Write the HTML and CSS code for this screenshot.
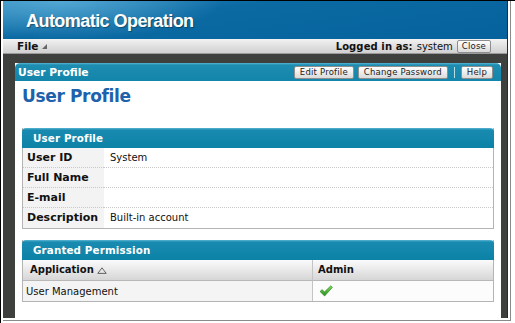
FILE: index.html
```html
<!DOCTYPE html>
<html>
<head>
<meta charset="utf-8">
<link rel="stylesheet" href="styles.css">
</head>
<body>
<div class="frame">
  <div class="win">
    <div class="app">
      <header class="topbar"><h1 class="title">Automatic Operation</h1></header>
      <nav class="menubar">
        <span class="menu">File <svg class="menu-arrow" width="5" height="5" viewBox="0 0 5 5"><polygon points="0,5 5,5 5,0" fill="#666"/></svg></span>
        <div class="login"><b>Logged in as:</b> <span class="user">system</span> <button class="btn">Close</button></div>
      </nav>
      <main class="main">
        <section class="panel">
          <div class="panel-head">
            <span class="panel-title">User Profile</span>
            <div class="actions">
              <button class="btn">Edit Profile</button>
              <button class="btn">Change Password</button>
              <span class="sep"></span>
              <button class="btn">Help</button>
            </div>
          </div>
          <div class="panel-body">
            <h2 class="heading">User Profile</h2>
            <div class="box">
              <div class="box-head">User Profile</div>
              <div class="props">
                <div class="lbl">User ID</div><div class="val">System</div>
                <div class="lbl">Full Name</div><div class="val"></div>
                <div class="lbl">E-mail</div><div class="val"></div>
                <div class="lbl last">Description</div><div class="val last">Built-in account</div>
              </div>
            </div>
            <div class="box box2">
              <div class="box-head">Granted Permission</div>
              <div class="grid">
                <div class="th th-app">Application <svg class="sort" width="10" height="7" viewBox="0 0 10 7"><polygon points="5,0.8 9.2,6.4 0.8,6.4" fill="none" stroke="#555" stroke-width="0.9"/></svg></div>
                <div class="th th-admin">Admin</div>
                <div class="td td-app">User Management</div>
                <div class="td td-admin"><svg width="14" height="12" viewBox="0 0 14 12"><defs><linearGradient id="g" x1="0" y1="0" x2="0" y2="1"><stop offset="0" stop-color="#7ee05a"/><stop offset="1" stop-color="#1f8f1a"/></linearGradient></defs><path d="M1 6.5 L3.2 4.6 L5.4 7 L11.8 0.8 L13.4 2.4 L5.6 11 Z" fill="url(#g)" stroke="#2c7a1e" stroke-width="0.6"/></svg></div>
              </div>
            </div>
          </div>
        </section>
      </main>
    </div>
  </div>
</div>
</body>
</html>
```
FILE: styles.css
```css
* { box-sizing: border-box; }
html, body { margin: 0; padding: 0; background: #fff; }
body { font-family: "DejaVu Sans", Verdana, sans-serif; color: #111; }

.frame {
  width: 515px;
  height: 323px;
  border-left: 1px solid #000;
  border-top: 1px solid #000;
  padding-left: 2px;
  overflow: hidden;
}
.win {
  width: 508px;
  height: 320px;
  border-right: 1px solid #8a8a8a;
  border-bottom: 1px solid #8a8a8a;
  padding-right: 2px;
  padding-bottom: 2px;
}
.app {
  width: 505px;
  height: 317px;
  display: flex;
  flex-direction: column;
  background: #3d403d;
  border-right: 1px solid #2a2a2a;
}

.topbar {
  height: 38px;
  flex: none;
  background:
    radial-gradient(ellipse 160px 38px at 60px 0px, rgba(120,200,235,0.55), rgba(120,200,235,0) 100%),
    linear-gradient(172deg, #2c86bb 0%, #0c6aa3 35%, #05629c 100%);
  padding-left: 23px;
  display: flex;
  align-items: center;
}
.title {
  margin: 0;
  font-family: "Liberation Sans", Arial, sans-serif;
  font-weight: bold;
  font-size: 18px;
  letter-spacing: -0.55px;
  color: #fff;
  text-shadow: 1px 1px 1px rgba(0,0,0,0.35);
  padding-top: 3px;
}

.menubar {
  height: 15px;
  flex: none;
  background: linear-gradient(#f2f2f2, #d0d0d0);
  border-bottom: 1px solid #9a9a9a;
  display: flex;
  align-items: center;
  justify-content: space-between;
  padding: 0 16px 0 14px;
}
.menu { font-weight: bold; font-size: 10.5px; display: flex; align-items: center; gap: 3px; }
.menu-arrow { margin-top: 1px; }
.login { font-size: 10px; display: flex; align-items: center; }
.login b { letter-spacing: 0.1px; }
.user { margin-left: 4px; }

.btn {
  font-family: "DejaVu Sans", Verdana, sans-serif;
  font-size: 8.5px;
  color: #222;
  height: 13px;
  line-height: 11px;
  padding: 0 5px;
  margin: 0;
  border: 1px solid #8e8e8e;
  border-radius: 2px;
  background: linear-gradient(#ffffff, #dadada);
  letter-spacing: 0.2px;
}
.login .btn { margin-left: 4px; padding: 0 4px; }

.main {
  flex: 1;
  padding: 9px 6px 0 12px;
  display: flex;
  flex-direction: column;
}
.panel {
  flex: 1;
  display: flex;
  flex-direction: column;
  background: #fff;
}
.panel-head {
  height: 18px;
  flex: none;
  border-radius: 5px 5px 0 0;
  background: linear-gradient(#59b5d3 0px, #1d8db1 2px, #1485aa 100%);
  display: flex;
  align-items: center;
  justify-content: space-between;
  padding: 0 8px 0 3px;
}
.panel-title { color: #fff; font-weight: bold; font-size: 10.7px; }
.actions { display: flex; align-items: center; gap: 4px; }
.sep { width: 1px; height: 11px; background: #b9dbe6; margin: 0 2px 0 2px; }

.panel-body { flex: 1; padding: 5px 7px 0 7px; }
.heading {
  margin: 0;
  font-size: 17px;
  line-height: 21px;
  letter-spacing: -0.35px;
  color: #1d62ab;
  font-weight: bold;
}

.box {
  margin-top: 21px;
  border: 1px solid #b4b4b4;
  border-top: none;
}
.box2 { margin-top: 11px; }
.box-head {
  height: 20px;
  margin: 0 -1px;
  border-radius: 4px 4px 0 0;
  background: linear-gradient(#5ab6d3 0px, #1a8bb0 2px, #0b82a7 100%);
  color: #fff;
  font-weight: bold;
  font-size: 10.3px;
  letter-spacing: 0.15px;
  line-height: 20px;
  padding-left: 11px;
}

.props {
  display: grid;
  grid-template-columns: 81px 1fr;
}
.lbl, .val {
  height: 20px;
  line-height: 19px;
  border-bottom: 1px dotted #c8c8c8;
}
.lbl {
  background: #f3f3f3;
  font-weight: bold;
  font-size: 11px;
  padding-left: 4px;
}
.val { font-size: 10px; padding-left: 6px; }
.lbl.last, .val.last { border-bottom: none; height: 20px; }

.grid {
  display: grid;
  grid-template-columns: 289px 1fr;
}
.th {
  height: 21px;
  line-height: 20px;
  font-weight: bold;
  font-size: 10px;
  background: linear-gradient(#fbfbfb, #d6d6d6);
  border-bottom: 1px solid #b8b8b8;
  display: flex;
  align-items: center;
}
.th-app { padding-left: 7px; gap: 3px; }
.th-admin { padding-left: 5px; border-left: 1px solid #c4c4c4; }
.td {
  height: 20px;
  font-size: 10px;
  display: flex;
  align-items: center;
}
.td-app { padding-left: 3px; background: #f4f4f4; }
.td-admin { padding-left: 6px; border-left: 1px solid #c4c4c4; background: #fcfcfc; }
```
